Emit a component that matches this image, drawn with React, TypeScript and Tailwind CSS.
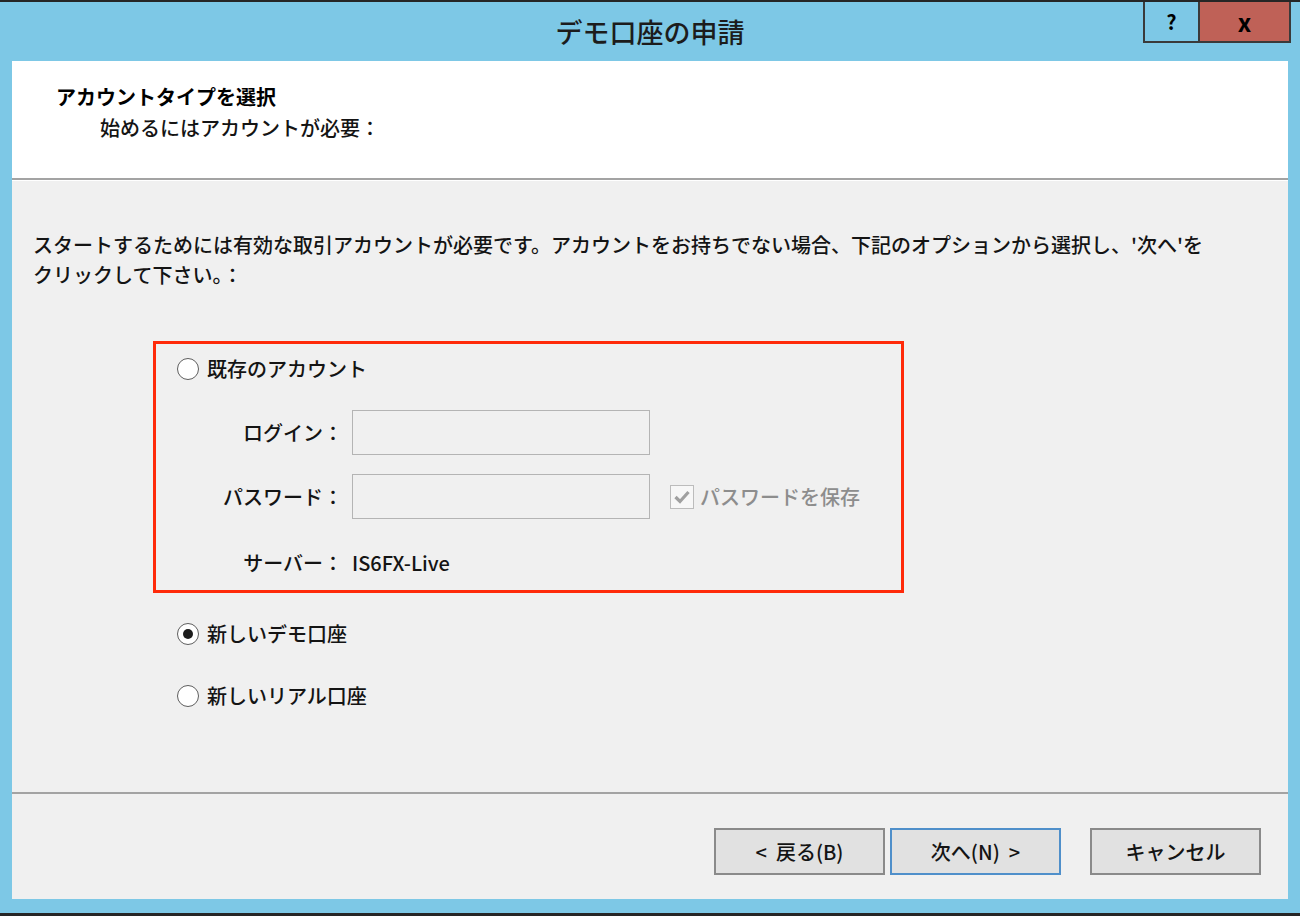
import React from "react";

const jp = "font-['Noto_Sans_CJK_JP','Noto_Sans',sans-serif]";

function Radio({ label, checked }: { label: string; checked?: boolean }) {
  return (
    <div className="flex h-[30px] items-center">
      <div className="flex h-[22px] w-[22px] items-center justify-center rounded-full border-[1.5px] border-[#5e5e5e] bg-white">
        {checked && <div className="h-[10px] w-[10px] rounded-full bg-[#1c1c1c]" />}
      </div>
      <span className="ml-[8px] text-[20px] leading-[30px] text-[#141414]">{label}</span>
    </div>
  );
}

function Field({ label }: { label: string }) {
  return (
    <div className="flex h-[45px] items-center">
      <span className="w-[187px] text-right text-[20px] leading-[30px] text-[#141414]">{label}</span>
      <div className="ml-[9px] h-[45px] w-[298px] border-[1.5px] border-[#b4b4b4] bg-[#f0f0f0]" />
    </div>
  );
}

function WizButton({ label, primary }: { label: string; primary?: boolean }) {
  return (
    <button
      className={
        "flex h-[47px] w-[171px] items-center justify-center whitespace-pre border-2 bg-[#e1e1e1] text-[20px] text-[#141414] " +
        (primary ? "border-[#4f8fca]" : "border-[#8a8a8a]")
      }
    >
      {label}
    </button>
  );
}

export default function App() {
  return (
    <div className={`flex h-[916px] w-[1300px] flex-col bg-[#7dc8e6] font-medium ${jp}`}>
      <div className="h-[2px] bg-[#262626]" />

      {/* title bar */}
      <div className="relative flex h-[59px] items-center justify-center">
        <span className="text-[27px] leading-none text-[#1c1c1c]">デモ口座の申請</span>
        <div className="absolute right-[9px] top-0 flex h-[41px]">
          <div className="flex w-[55px] items-center justify-center border-2 border-r-0 border-t-0 border-[#3a3a3a] text-[20px] font-bold text-black">
            ?
          </div>
          <div className="flex w-[93px] items-center justify-center border-2 border-t-0 border-[#3a3a3a] bg-[#bf6157] text-[24px] font-bold leading-none text-black">
            x
          </div>
        </div>
      </div>

      {/* client area */}
      <div className="mx-[12px] flex h-[838px] flex-col bg-[#f0f0f0]">
        <div className="h-[117px] bg-white pl-[44px] pt-[22px]">
          <div className="text-[20px] font-bold leading-[28px] text-black">アカウントタイプを選択</div>
          <div className="ml-[44px] mt-[3px] text-[20px] leading-[28px] text-[#141414]">始めるにはアカウントが必要：</div>
        </div>
        <div className="h-[2px] bg-[#a3a3a3]" />
        <div className="h-px bg-white" />

        <div className="flex flex-1 flex-col pl-[21px] pt-[49px]">
          <p className="text-[20px] leading-[30px] text-[#141414]">
            スタートするためには有効な取引アカウントが必要です。アカウントをお持ちでない場合、下記のオプションから選択し、'次へ'を
            <br />
            クリックして下さい。：
          </p>

          <div className="ml-[120px] mt-[51px] flex h-[252px] w-[751px] flex-col border-[3px] border-[#ff2a0a] pl-[21px] pt-[10px]">
            <Radio label="既存のアカウント" />
            <div className="-ml-[21px] mt-[26px] flex flex-col">
              <Field label="ログイン：" />
              <div className="mt-[19px] flex items-center">
                <Field label="パスワード：" />
                <div className="ml-[20px] flex h-[24px] w-[24px] items-center justify-center border border-[#bcbcbc] bg-[#f7f7f7]">
                  <svg viewBox="0 0 20 20" className="h-[20px] w-[20px]">
                    <path d="M3.5 10 L8 14.5 L16.5 5" fill="none" stroke="#a0a0a0" strokeWidth="3.2" />
                  </svg>
                </div>
                <span className="ml-[6px] text-[20px] leading-[30px] text-[#8d8d8d]">パスワードを保存</span>
              </div>
              <div className="mt-[29px] flex h-[30px] items-center">
                <span className="w-[187px] text-right text-[20px] leading-[30px] text-[#141414]">サーバー：</span>
                <span className="ml-[9px] text-[20px] leading-[30px] text-[#141414]">IS6FX-Live</span>
              </div>
            </div>
          </div>

          <div className="ml-[144px] mt-[26px]">
            <Radio label="新しいデモ口座" checked />
          </div>
          <div className="ml-[144px] mt-[32px]">
            <Radio label="新しいリアル口座" />
          </div>
        </div>

        <div className="h-[2px] bg-[#a3a3a3]" />
        <div className="flex h-[105px] justify-end pr-[27px] pt-[34px]">
          <div className="flex h-[47px]">
            <WizButton label="<  戻る(B)" />
            <div className="ml-[5px]">
              <WizButton label="次へ(N)  >" primary />
            </div>
            <div className="ml-[29px]">
              <WizButton label="キャンセル" />
            </div>
          </div>
        </div>
      </div>

      <div className="h-[14px]" />
      <div className="flex-1 bg-[#262626]" />
    </div>
  );
}
